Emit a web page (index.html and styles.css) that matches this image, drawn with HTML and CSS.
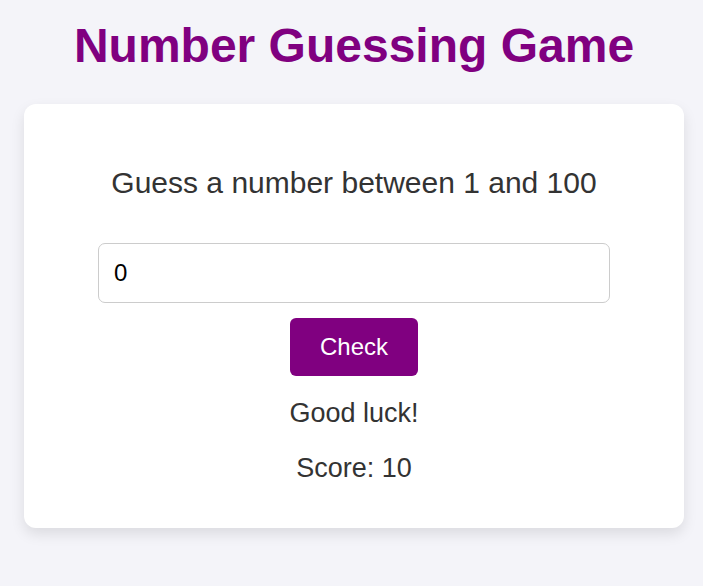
FILE: index.html
```html
<!DOCTYPE html>
<html lang="en">
<head>
<meta charset="utf-8">
<title>Number Guessing Game</title>
<link rel="stylesheet" href="styles.css">
</head>
<body>
<h1 class="title">Number Guessing Game</h1>
<div class="card">
  <p class="prompt">Guess a number between 1 and 100</p>
  <input class="guess" type="number" value="0">
  <button class="check" type="button">Check</button>
  <p class="message">Good luck!</p>
  <p class="score">Score: 10</p>
</div>
</body>
</html>
```
FILE: styles.css
```css
html, body {
  margin: 0;
  padding: 0;
}
body {
  background: #f4f4f9;
  font-family: "Liberation Sans", Arial, sans-serif;
  color: #333;
  padding: 18px 19px 40px 24px;
}
.title {
  font-size: 48px;
  font-weight: bold;
  color: #800080;
  text-align: center;
  margin: 0 0 31px;
  line-height: normal;
}
.card {
  width: 600px;
  background: #fff;
  padding: 30px;
  border-radius: 12px;
  box-shadow: 0 6px 14px rgba(0, 0, 0, 0.1);
  text-align: center;
}
.prompt {
  font-size: 30px;
  margin: 32px 0 43px;
}
.guess {
  display: block;
  box-sizing: content-box;
  width: 480px;
  margin: 0 auto 15px;
  padding: 15px;
  border: 1.5px solid #ccc;
  border-radius: 7px;
  font-family: "Liberation Sans", Arial, sans-serif;
  font-size: 24px;
  line-height: normal;
  color: #000;
  background: #fff;
  outline: none;
  -moz-appearance: textfield;
}
.guess::-webkit-outer-spin-button,
.guess::-webkit-inner-spin-button {
  -webkit-appearance: none;
  margin: 0;
}
.check {
  display: block;
  margin: 0 auto;
  padding: 15px 30px;
  font-family: "Liberation Sans", Arial, sans-serif;
  font-size: 24px;
  line-height: normal;
  color: #fff;
  background: #800080;
  border: none;
  border-radius: 6px;
}
.message {
  font-size: 27px;
  margin: 22px 0 24px;
}
.score {
  font-size: 27px;
  margin: 0 0 14px;
}
```
